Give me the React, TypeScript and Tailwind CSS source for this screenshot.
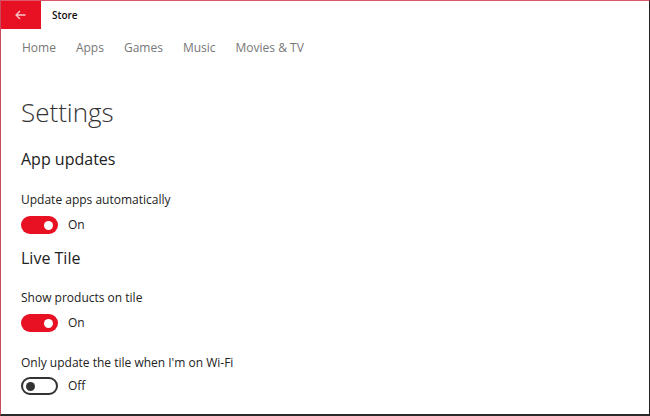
import React from "react";

function Toggle({ on, label }: { on: boolean; label: string }) {
  return (
    <div className="flex items-center h-[18px]">
      {on ? (
        <div className="w-[37px] h-[18px] rounded-full bg-[#e81123] flex items-center justify-end pr-[5px]">
          <div className="w-[9px] h-[9px] rounded-full bg-white" />
        </div>
      ) : (
        <div className="w-[37px] h-[18px] rounded-full border-2 border-[#333] flex items-center justify-start pl-[3px]">
          <div className="w-[9px] h-[9px] rounded-full bg-[#333]" />
        </div>
      )}
      <span className="ml-[10px] text-[12px] leading-[18px] text-[#222]">{label}</span>
    </div>
  );
}

export default function App() {
  return (
    <div
      className="w-[650px] h-[416px] bg-white relative overflow-hidden border-t border-l border-t-[#e0556a] border-l-[#c94b5e] border-r border-r-[#222] border-b-2 border-b-[#2a2a2a] flex flex-col"
      style={{ fontFamily: '"Open Sans", "Noto Sans", sans-serif' }}
    >
      <div className="flex items-center h-[28px] shrink-0">
        <div className="w-[41px] h-[28px] -mt-px -ml-px bg-[#e81123] flex items-center justify-center">
          <svg width="11" height="10" viewBox="0 0 11 10" fill="none" stroke="#f7c6cb" strokeWidth="1.3">
            <path d="M10.5 5H1.2M5 1L1 5l4 4" />
          </svg>
        </div>
        <span className="ml-[11px] text-[10px] font-semibold text-[#111]">Store</span>
      </div>
      <div className="flex items-center pl-[21px] gap-[20px] mt-[10px] text-[12px] leading-[18px] text-[#777]">
        <span>Home</span>
        <span>Apps</span>
        <span>Games</span>
        <span>Music</span>
        <span>Movies &amp; TV</span>
      </div>
      <div className="pl-[20px] flex flex-col">
        <div className="mt-[38px] text-[26px] font-light text-[#333] leading-[34px]">Settings</div>
        <div className="mt-[18px] text-[16px] text-[#222] leading-[24px]">App updates</div>
        <div className="mt-[20px] text-[12px] text-[#222] leading-[18px]">Update apps automatically</div>
        <div className="mt-[7px]"><Toggle on label="On" /></div>
        <div className="mt-[12px] text-[16px] text-[#222] leading-[24px]">Live Tile</div>
        <div className="mt-[19px] text-[12px] text-[#222] leading-[18px]">Show products on tile</div>
        <div className="mt-[7px]"><Toggle on label="On" /></div>
        <div className="mt-[22px] text-[12px] text-[#222] leading-[18px]">Only update the tile when I'm on Wi-Fi</div>
        <div className="mt-[5px]"><Toggle on={false} label="Off" /></div>
      </div>
    </div>
  );
}
